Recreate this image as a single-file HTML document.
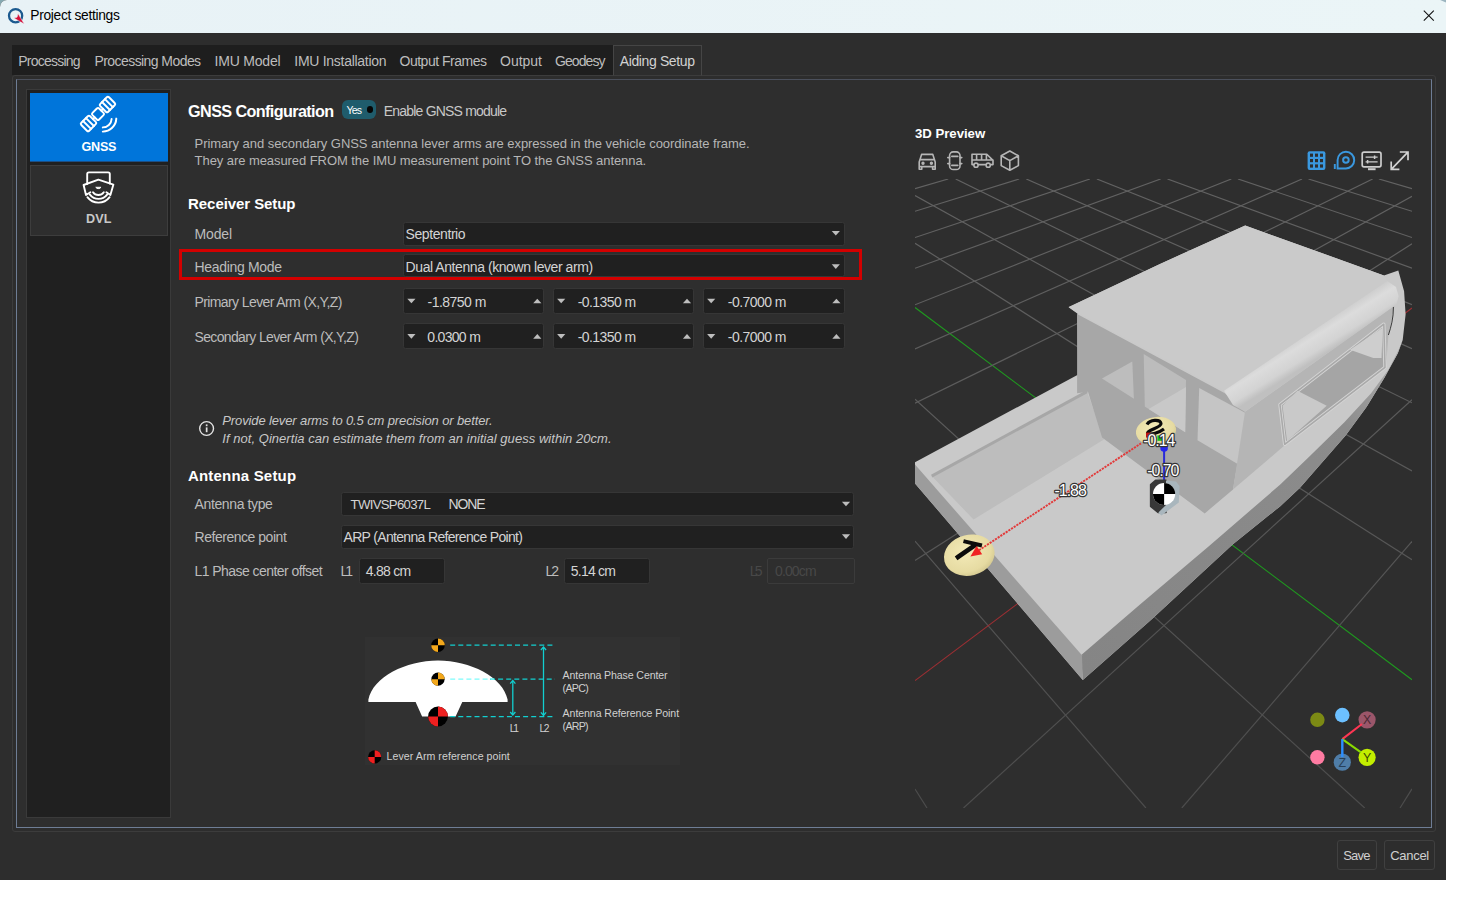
<!DOCTYPE html>
<html><head><meta charset="utf-8"><title>Project settings</title>
<style>
html,body{margin:0;padding:0;}
body{width:1465px;height:900px;background:#fff;position:relative;overflow:hidden;font-family:"Liberation Sans",sans-serif;}
.abs{position:absolute;}
.t{position:absolute;white-space:pre;line-height:1;}
#win{position:absolute;left:0;top:0;width:1446px;height:880px;background:#2d2d2d;overflow:hidden;border-top-left-radius:7px;}
#title{position:absolute;left:0;top:0;width:1446px;height:33px;background:linear-gradient(90deg,#e8f2f6,#ebf5f7);}
.box{position:absolute;box-sizing:border-box;}
.inp{position:absolute;box-sizing:border-box;background:#202020;border:1px solid #363636;border-radius:2.5px;}
</style></head><body>
<div class="abs" style="left:0;top:0;width:10px;height:10px;background:#86a9b1;"></div>
<div id="win">
<div id="title"></div>

<svg class="abs" style="left:0;top:0" width="1446" height="34" viewBox="0 0 1446 34">
 <circle cx="15.6" cy="15.7" r="6.6" fill="none" stroke="#1c5a8f" stroke-width="2.3"/>
 <polygon points="18,13.6 24.3,24.1 13.9,18.1 17.1,17.2" fill="#d5103a" stroke="#eaf3f7" stroke-width="0.5"/>
 <path d="M1423.8 10.7 L1433.8 20.7 M1433.8 10.7 L1423.8 20.7" stroke="#111" stroke-width="1.1" fill="none"/>
 <polygon points="1440.2,0 1446,0 1446,2.6" fill="#9bb4bf"/>
</svg>
<div class="box" style="left:12px;top:45px;width:601px;height:30px;background:#1e1e1e;"></div>
<div class="box" style="left:12px;top:75px;width:1424px;height:757px;border:1px solid #3c3c3c;border-radius:3px;"></div>
<div class="box" style="left:613px;top:45px;width:89px;height:31px;border:1px solid #454545;border-bottom:1px solid #3c3c3c;background:#2d2d2d;"></div>
<div class="box" style="left:16px;top:79px;width:1416px;height:749px;border:1px solid #6e7d95;border-top-color:#4b505c;background:#2e2e2e;"></div>
<div class="box" style="left:26px;top:89px;width:145px;height:729px;border:1px solid #3a3a3a;background:#202020;"></div>
<div class="box" style="left:30px;top:93px;width:137.5px;height:69px;background:#0075da;border-bottom:1px solid #1c4f86;"></div>
<div class="box" style="left:30px;top:165px;width:137.5px;height:71px;background:#2e2e2e;border:1px solid #3d3d3d;"></div>
<svg class="abs" style="left:30px;top:93px" width="138" height="145" viewBox="30 93 138 145" fill="none" stroke="#fff" stroke-width="1.95" stroke-linejoin="round" stroke-linecap="round">
 <g transform="translate(98,114) rotate(-45)">
  <rect x="-19.6" y="-5.6" width="12.4" height="11.2" rx="1.6"/>
  <path d="M-15.5 -5.6 V5.6 M-11.4 -5.6 V5.6"/>
  <rect x="-4.7" y="-4.7" width="9.4" height="9.4" rx="1.6"/>
  <path d="M-7.2 0 H-4.7 M4.7 0 H7.2"/>
  <rect x="7.2" y="-5.6" width="12.4" height="11.2" rx="1.6"/>
  <path d="M11.3 -5.6 V5.6 M15.4 -5.6 V5.6"/>
 </g>
 <path d="M116.3 118.6 A13.6 13.6 0 0 1 102.8 131.6"/>
 <path d="M111.6 119 A8.9 8.9 0 0 1 102.8 127.4"/>
 <g stroke-width="1.9">
 <path d="M87.2 184 V174 a1.6 1.6 0 0 1 1.6 -1.6 H108.2 a1.6 1.6 0 0 1 1.6 1.6 V183.6"/>
 <path d="M83.6 185 L98.4 179.6 L113.4 184.6 L110.4 195 L106.4 192.2 M83.6 185 L86 195 L90.4 192.2"/>
 <path d="M89.9 194.6 A10.8 10.8 0 0 0 107.1 194.6"/>
 <path d="M87.4 197.2 A14 14 0 0 0 109.6 197.2"/>
 <path d="M93 192.2 A6.6 6.6 0 0 0 103.8 192.2"/>
 </g>
 <path d="M96 187.6 A3 3 0 0 0 100.8 187.6 Z" fill="#fff" stroke-width="1"/>
</svg>
<div class="box" style="left:1336.5px;top:839.5px;width:40.5px;height:30px;border:1px solid #404040;border-radius:3px;"></div>
<div class="box" style="left:1384px;top:839.5px;width:51.3px;height:30px;border:1px solid #404040;border-radius:3px;"></div>


<div class="box" style="left:341.8px;top:100.1px;width:34.3px;height:18.6px;border-radius:6px;background:#1f5c6c;"></div>
<div class="box" style="left:366.5px;top:106.1px;width:6.6px;height:6.6px;border-radius:50%;background:#050505;"></div>
<div class="inp" style="left:402.5px;top:221.5px;width:442.5px;height:24px;"></div>
<div class="inp" style="left:402.5px;top:254px;width:442.5px;height:23px;"></div>
<div class="box" style="left:179px;top:249px;width:683px;height:31px;border:3px solid #d30000;"></div>
<div class="inp" style="left:402.5px;top:288px;width:141.5px;height:26px;"></div>
<div class="inp" style="left:553px;top:288px;width:141px;height:26px;"></div>
<div class="inp" style="left:703px;top:288px;width:142px;height:26px;"></div>
<div class="inp" style="left:402.5px;top:322.5px;width:141.5px;height:26.5px;"></div>
<div class="inp" style="left:553px;top:322.5px;width:141px;height:26.5px;"></div>
<div class="inp" style="left:703px;top:322.5px;width:142px;height:26.5px;"></div>
<div class="inp" style="left:341.3px;top:492px;width:513px;height:23.7px;"></div>
<div class="inp" style="left:341.3px;top:524.7px;width:513px;height:24.5px;"></div>
<div class="inp" style="left:358.9px;top:557.6px;width:86.4px;height:26.6px;"></div>
<div class="inp" style="left:563.6px;top:557.6px;width:86.9px;height:26.6px;"></div>
<div class="box" style="left:767.2px;top:557.6px;width:87.4px;height:26.6px;border:1px solid #3b3b3b;border-radius:2px;"></div>
<svg class="abs" style="left:170px;top:90px" width="700" height="500" viewBox="170 90 700 500">
 <polygon points="831.7,230.9 839.9,230.9 835.8,235.5" fill="#bdbdbd"/><polygon points="831.7,264.3 839.9,264.3 835.8,268.9" fill="#bdbdbd"/>
 <polygon points="841.9,501.7 850.1,501.7 846.0,506.3" fill="#bdbdbd"/><polygon points="841.9,534.3 850.1,534.3 846.0,538.9" fill="#bdbdbd"/>
 <polygon points="407.3,298.7 415.5,298.7 411.4,303.3" fill="#bdbdbd"/><polygon points="557.1,298.7 565.3,298.7 561.2,303.3" fill="#bdbdbd"/><polygon points="707.1,298.7 715.3,298.7 711.2,303.3" fill="#bdbdbd"/><polygon points="407.3,334.1 415.5,334.1 411.4,338.7" fill="#bdbdbd"/><polygon points="557.1,334.1 565.3,334.1 561.2,338.7" fill="#bdbdbd"/><polygon points="707.1,334.1 715.3,334.1 711.2,338.7" fill="#bdbdbd"/>
 <polygon points="533.2,303.3 541.4,303.3 537.3,298.7" fill="#bdbdbd"/><polygon points="682.9,303.3 691.1,303.3 687.0,298.7" fill="#bdbdbd"/><polygon points="832.3,303.3 840.5,303.3 836.4,298.7" fill="#bdbdbd"/><polygon points="533.2,338.7 541.4,338.7 537.3,334.1" fill="#bdbdbd"/><polygon points="682.9,338.7 691.1,338.7 687.0,334.1" fill="#bdbdbd"/><polygon points="832.3,338.7 840.5,338.7 836.4,334.1" fill="#bdbdbd"/>
 <circle cx="206.6" cy="428.5" r="6.9" fill="none" stroke="#e4e4e4" stroke-width="1.4"/>
 <rect x="205.8" y="427.4" width="1.7" height="4.8" fill="#e4e4e4"/><rect x="205.8" y="424.4" width="1.7" height="1.8" fill="#e4e4e4"/>
</svg>


<div class="box" style="left:365px;top:637px;width:315px;height:128px;background:#313131;"></div>
<svg class="abs" style="left:360px;top:630px" width="330" height="140" viewBox="360 630 330 140">
 <path d="M368.4 702 V699.6 C373 677 406 660.5 438 660.5 C470 660.5 503 677 507.6 699.6 V702 H462.3 L455.6 716.5 H422.1 L415.6 702 Z" fill="#fff"/>
 <g stroke="#12cfd0" stroke-width="1.3" stroke-dasharray="5 3.1" fill="none">
  <path d="M450.2 645.2 H555"/><path d="M450.2 716.6 H555"/><path d="M490 679.2 H555"/>
 </g>
 <path d="M450.2 679.2 H494" stroke="#7ffcfc" stroke-width="1.3" stroke-dasharray="5 3.1" fill="none"/>
 <path d="M512.8 681 V714.6" stroke="#12cfd0" stroke-width="1.3" fill="none"/><path d="M510.19999999999993 683.6 L512.8 680.6 L515.4 683.6 M510.19999999999993 712.0 L512.8 715.0 L515.4 712.0" stroke="#12cfd0" stroke-width="1.3" fill="none"/><path d="M543.5 647.4 V715" stroke="#12cfd0" stroke-width="1.3" fill="none"/><path d="M540.9 650.0 L543.5 647.0 L546.1 650.0 M540.9 712.4 L543.5 715.4 L546.1 712.4" stroke="#12cfd0" stroke-width="1.3" fill="none"/>
 <circle cx="438" cy="645.2" r="6.8" fill="#000"/><path d="M438 645.2 L438 638.4000000000001 A6.8 6.8 0 0 1 444.8 645.2 Z" fill="#f3a81c"/><path d="M438 645.2 L438 652.0 A6.8 6.8 0 0 1 431.2 645.2 Z" fill="#f3a81c"/><circle cx="438" cy="679.2" r="6.6" fill="#000"/><path d="M438 679.2 L438 672.6 A6.6 6.6 0 0 1 444.6 679.2 Z" fill="#f3a81c"/><path d="M438 679.2 L438 685.8000000000001 A6.6 6.6 0 0 1 431.4 679.2 Z" fill="#f3a81c"/><circle cx="438" cy="716.5" r="9.9" fill="#000"/><path d="M438 716.5 L438 706.6 A9.9 9.9 0 0 1 447.9 716.5 Z" fill="#ee2020"/><path d="M438 716.5 L438 726.4 A9.9 9.9 0 0 1 428.1 716.5 Z" fill="#ee2020"/><circle cx="374.7" cy="756.9" r="6.6" fill="#000"/><path d="M374.7 756.9 L374.7 750.3 A6.6 6.6 0 0 1 381.3 756.9 Z" fill="#ee2020"/><path d="M374.7 756.9 L374.7 763.5 A6.6 6.6 0 0 1 368.09999999999997 756.9 Z" fill="#ee2020"/>
</svg>


<svg class="abs" style="left:900px;top:120px" width="540" height="700" viewBox="900 120 540 700">
<defs><clipPath id="vp"><rect x="915" y="179" width="497" height="629"/></clipPath><linearGradient id="gl" gradientUnits="userSpaceOnUse" x1="0" y1="179" x2="0" y2="808"><stop offset="0" stop-color="#626262"/><stop offset="0.5" stop-color="#585858"/><stop offset="1" stop-color="#4c4c4c"/></linearGradient></defs>

<g fill="none" stroke="#b6b6b6" stroke-width="1.6" stroke-linejoin="round" stroke-linecap="round">
 <!-- car front -->
 <path d="M919.2 169.2 V162 L921.6 154.4 H932.8 L935.2 162 V169.2 M919.2 166.6 H935.2 M920.2 159.6 H934.2 M919.2 169.2 H921.8 V166.8 M935.2 169.2 H932.6 V166.8"/>
 <circle cx="923" cy="163.2" r="0.9" fill="#b6b6b6"/><circle cx="931.4" cy="163.2" r="0.9" fill="#b6b6b6"/>
 <!-- car top -->
 <rect x="949.6" y="151.9" width="10.4" height="17.6" rx="3.6"/>
 <path d="M951.8 156.4 H957.8 M951.8 165.4 H957.8 M947.8 157.6 H949.6 M960 157.6 H961.8 M947.8 163.6 H949.6 M960 163.6 H961.8"/>
 <!-- van -->
 <path d="M972 164.6 V154.2 H986.8 L993 160.4 V164.6 H991.2 M972 164.6 H973.6 M978.4 164.6 H985.4 M972 160 H993 M976.6 154.2 V160 M981.6 154.2 V160 M986.4 154.2 V160"/>
 <circle cx="976" cy="165.2" r="2.1"/><circle cx="988.2" cy="165.2" r="2.1"/>
 <!-- cube -->
 <path d="M1009.8 151 L1018.4 155.8 V165.6 L1009.8 170.2 L1001.2 165.6 V155.8 Z M1001.2 155.8 L1009.8 160.6 L1018.4 155.8 M1009.8 160.6 V170.2"/>
</g>
<!-- grid icon -->
<rect x="1307.6" y="151.2" width="17.8" height="18.8" rx="2" fill="#3a98df"/>
<g fill="#2e2e2e">
 <rect x="1310" y="153.6" width="3" height="3.2"/><rect x="1315" y="153.6" width="3" height="3.2"/><rect x="1320" y="153.6" width="3" height="3.2"/>
 <rect x="1310" y="159" width="3" height="3.2"/><rect x="1315" y="159" width="3" height="3.2"/><rect x="1320" y="159" width="3" height="3.2"/>
 <rect x="1310" y="164.4" width="3" height="3.2"/><rect x="1315" y="164.4" width="3" height="3.2"/><rect x="1320" y="164.4" width="3" height="3.2"/>
</g>
<g fill="none" stroke="#3a98df" stroke-width="1.95">
 <path d="M1337.6 168.4 V160 A8.3 8.3 0 1 1 1345.9 168.4 Z"/>
 <circle cx="1345.9" cy="160" r="2.8"/>
 <path d="M1334.8 164 V169" stroke-width="1.9"/>
</g>
<g fill="none" stroke="#cdcdcd" stroke-width="1.7" stroke-linejoin="round">
 <rect x="1362.2" y="152.2" width="18.8" height="14.6" rx="1.8"/>
 <path d="M1368 169.2 H1375.6" stroke-width="2"/>
 <path d="M1365.6 157.2 H1377.6 M1365.6 161.8 H1377.6" stroke-width="1.2"/>
 <path d="M1374.6 155.4 V159 M1367.6 160 V163.6" stroke-width="1.5"/>
</g>
<g fill="none" stroke="#d2d2d2" stroke-width="1.7">
 <path d="M1392 168.6 L1407.4 152.6 M1399.8 152 H1408 V160.2 M1391.2 161.4 V169.4 H1399.4"/>
</g>

<g clip-path="url(#vp)">
<line x1="915.0" y1="789.0" x2="927.0" y2="808.0" stroke="url(#gl)" stroke-width="1.15"/>
<line x1="915.0" y1="541.1" x2="1145.9" y2="808.0" stroke="url(#gl)" stroke-width="1.15"/>
<line x1="915.0" y1="399.3" x2="1364.7" y2="808.0" stroke="url(#gl)" stroke-width="1.15"/>
<line x1="915.0" y1="307.5" x2="1412.0" y2="679.7" stroke="#1f9a1f" stroke-width="1.15"/>
<line x1="915.0" y1="243.2" x2="1412.0" y2="559.7" stroke="url(#gl)" stroke-width="1.15"/>
<line x1="915.0" y1="195.6" x2="1412.0" y2="471.0" stroke="url(#gl)" stroke-width="1.15"/>
<line x1="955.7" y1="179.0" x2="1412.0" y2="402.8" stroke="url(#gl)" stroke-width="1.15"/>
<line x1="1026.3" y1="179.0" x2="1412.0" y2="348.6" stroke="url(#gl)" stroke-width="1.15"/>
<line x1="1096.9" y1="179.0" x2="1412.0" y2="304.6" stroke="url(#gl)" stroke-width="1.15"/>
<line x1="1167.5" y1="179.0" x2="1412.0" y2="268.2" stroke="url(#gl)" stroke-width="1.15"/>
<line x1="1238.0" y1="179.0" x2="1412.0" y2="237.5" stroke="url(#gl)" stroke-width="1.15"/>
<line x1="1308.5" y1="179.0" x2="1412.0" y2="211.3" stroke="url(#gl)" stroke-width="1.15"/>
<line x1="1378.9" y1="179.0" x2="1412.0" y2="188.6" stroke="url(#gl)" stroke-width="1.15"/>
<line x1="915.0" y1="188.6" x2="948.2" y2="179.0" stroke="url(#gl)" stroke-width="1.15"/>
<line x1="915.0" y1="211.3" x2="1019.1" y2="179.0" stroke="url(#gl)" stroke-width="1.15"/>
<line x1="915.0" y1="237.5" x2="1089.9" y2="179.0" stroke="url(#gl)" stroke-width="1.15"/>
<line x1="915.0" y1="268.3" x2="1160.6" y2="179.0" stroke="url(#gl)" stroke-width="1.15"/>
<line x1="915.0" y1="304.8" x2="1231.3" y2="179.0" stroke="url(#gl)" stroke-width="1.15"/>
<line x1="915.0" y1="348.9" x2="1302.0" y2="179.0" stroke="url(#gl)" stroke-width="1.15"/>
<line x1="915.0" y1="403.2" x2="1372.6" y2="179.0" stroke="url(#gl)" stroke-width="1.15"/>
<line x1="915.0" y1="471.5" x2="1412.0" y2="196.3" stroke="url(#gl)" stroke-width="1.15"/>
<line x1="915.0" y1="560.4" x2="1412.0" y2="243.8" stroke="url(#gl)" stroke-width="1.15"/>
<line x1="915.0" y1="680.6" x2="1412.0" y2="308.0" stroke="#9c2f33" stroke-width="1.15"/>
<line x1="963.5" y1="808.0" x2="1412.0" y2="399.8" stroke="url(#gl)" stroke-width="1.15"/>
<line x1="1181.8" y1="808.0" x2="1412.0" y2="541.4" stroke="url(#gl)" stroke-width="1.15"/>
<line x1="1400.0" y1="808.0" x2="1412.0" y2="788.9" stroke="url(#gl)" stroke-width="1.15"/>
<defs><linearGradient id="gh" gradientUnits="userSpaceOnUse" x1="1085" y1="670" x2="1400" y2="300"><stop offset="0" stop-color="#858585"/><stop offset="0.73" stop-color="#8c8c8c"/><stop offset="0.88" stop-color="#a8a8a8"/><stop offset="1" stop-color="#c4c4c4"/></linearGradient><linearGradient id="gc" gradientUnits="userSpaceOnUse" x1="1300" y1="336" x2="1315" y2="360"><stop offset="0" stop-color="#cecece"/><stop offset="0.3" stop-color="#dcdcdc"/><stop offset="0.75" stop-color="#d3d3d3"/><stop offset="1" stop-color="#c0c0c0"/></linearGradient><radialGradient id="ga" cx="0.45" cy="0.4" r="0.7"><stop offset="0" stop-color="#f3eab8"/><stop offset="0.7" stop-color="#e6dba2"/><stop offset="1" stop-color="#c9bd85"/></radialGradient></defs>
<polygon points="915.0,462.2 1078.3,374.4 1077.3,313.5 1068.6,307.2 1160.0,263.9 1245.2,225.5 1383.9,275.4 1398.3,270.5 1404.1,291.3 1405.6,314.4 1403.6,332.0 1402.7,340.0 1397.8,353.3 1384.4,377.8 1366.7,406.7 1345.6,435.6 1300.0,487.8 1280.0,506.4 1232.6,544.6 1150.9,620.0 1082.8,680.0 915.0,483.4" fill="#c9c9c9"/>
<polygon points="1081.0,655.2 1140.0,604.4 1210.0,545.3 1280.0,484.7 1308.9,457.0 1344.4,422.2 1371.1,393.3 1388.9,368.9 1400.0,346.7 1402.7,340.0 1402.7,340.0 1397.8,353.3 1384.4,377.8 1366.7,406.7 1345.6,435.6 1300.0,487.8 1280.0,506.4 1232.6,544.6 1150.9,620.0 1082.8,680.0" fill="url(#gh)"/>
<polygon points="915.0,464.6 1082.0,655.3 1082.8,680.0 915.0,483.4" fill="#9c9c9c"/>
<polygon points="931.7,476.1 1087.0,391.6 1104.3,439.2 973.6,519.5" fill="#bdbdbd"/>
<path d="M931.7 476.1 L1087 391.6" stroke="#a7a7a7" stroke-width="3"/>
<polygon points="1077.1,314.0 1224.9,393.3 1246.2,412.8 1233.0,489.5 1204.7,513.4 1102.1,437.4 1088.0,391.8 1077.1,393.3" fill="#a7a7a7"/>
<polygon points="1102.0,378.5 1132.3,361.4 1133.9,398.8" fill="#bdbdbd"/>
<polygon points="1143.7,354.1 1186.0,380.0 1185.2,432.2 1144.8,406.5" fill="#bcbcbc"/>
<polygon points="1148.6,408.9 1186.0,387.0 1185.2,432.2" fill="#c8c8c8"/>
<polygon points="1199.2,387.9 1246.6,413.5 1239.3,464.9 1197.5,440.3" fill="#c5c5c5"/>
<polygon points="1245.0,411.7 1394.5,305.6 1388.5,335.0 1386.2,364.0 1380.0,368.9 1331.1,408.9 1284.4,445.6 1233.0,489.5" fill="#b5b5b5"/>
<polygon points="1280.0,404.7 1383.8,324.2 1385.0,367.3 1284.7,444.3" fill="#a5a5a5" stroke="#d4d4d4" stroke-width="3.4" stroke-linejoin="round"/>
<polygon points="1280.0,404.7 1383.8,324.2 1385.0,367.3 1284.7,444.3" fill="none" stroke="#a9a9a9" stroke-width="1.5" stroke-linejoin="round"/>
<polygon points="1282.5,405.7 1297.5,390.7 1326.7,405.8 1287.0,441.0" fill="#c9c9c9"/>
<polygon points="1350.0,349.8 1382.7,327.7 1381.5,358.0 1373.3,358.0" fill="#cecece"/>
<path d="M1393.4 307 C1393.6 318 1391 327 1388.4 335" stroke="#3a3a3a" stroke-width="1" fill="none"/>
<polygon points="1068.6,307.0 1160.0,263.9 1245.2,225.5 1383.9,275.4 1387.3,281.0 1224.0,390.7 1075.6,311.7" fill="#cacaca"/>
<polygon points="1224.0,390.7 1387.3,281.0 1396.0,287.0 1398.6,296.0 1396.7,304.3 1245.0,411.7 1233.0,405.0" fill="url(#gc)"/>

<ellipse cx="969.3" cy="555.2" rx="25.6" ry="20.4" transform="rotate(-14 969.3 555.2)" fill="url(#ga)"/>
<path d="M958 557 L975 545.2" stroke="#0b0b0b" stroke-width="4.6" stroke-linecap="square"/>
<path d="M965.4 541.6 L980 545" stroke="#0b0b0b" stroke-width="4" stroke-linecap="square"/>
<ellipse cx="1156" cy="431" rx="20.2" ry="14" transform="rotate(-8 1156 431)" fill="url(#ga)"/>
<path d="M1147 424.5 C1150 419.5 1160 419 1161 423.5 C1161.5 427.5 1147 430 1147.5 433 C1150 436 1160 432 1164 429" fill="none" stroke="#0a0a0a" stroke-width="3.2"/>
<path d="M979 550.2 L1141 443.4" stroke="#e23a3a" stroke-width="1.9" stroke-dasharray="2.2 1"/>
<path d="M970.4 556.6 L976.6 546 L982.2 554.2 Z" fill="#f02222"/>
<rect x="1146" y="432.6" width="5" height="5" fill="#c01010"/>
<rect x="1157.4" y="435.4" width="5.4" height="5.4" fill="#10c010"/>
<path d="M1164.1 447.6 V483" stroke="#2a2ad8" stroke-width="2"/>
<circle cx="1164.1" cy="447.9" r="3.8" fill="#2626ee"/>
<path d="M1150.6 484.6 L1155.6 480.2 H1166 V512.6 L1158 512.4 L1150.6 506.4 Z" fill="#383838" stroke="#383838" stroke-width="1.5" stroke-linejoin="round"/>
<path d="M1166 480.6 L1176 481.4 L1179.6 486 L1178.8 502.6 L1161.4 515.4 L1158.4 512.4 L1166 505 Z" fill="#a9b6bd"/>
<circle cx="1164.1" cy="494" r="11.1" fill="#fff"/>
<path d="M1164.1 494 V482.9 A11.1 11.1 0 0 1 1175.2 494 Z" fill="#000"/>
<path d="M1164.1 494 V505.1 A11.1 11.1 0 0 1 1153 494 Z" fill="#000"/>
<text x="1054.6" y="495.8" font-size="16" letter-spacing="-1.05" font-family="Liberation Sans, sans-serif" fill="#fff" stroke="#333" stroke-width="2.4" paint-order="stroke" stroke-linejoin="round">-1.88</text>
<text x="1143.2" y="445.6" font-size="16" letter-spacing="-1.05" font-family="Liberation Sans, sans-serif" fill="#fff" stroke="#333" stroke-width="2.4" paint-order="stroke" stroke-linejoin="round">-0.14</text>
<text x="1147.2" y="476.2" font-size="16" letter-spacing="-1.05" font-family="Liberation Sans, sans-serif" fill="#fff" stroke="#333" stroke-width="2.4" paint-order="stroke" stroke-linejoin="round">-0.70</text>


<circle cx="1317.4" cy="719.8" r="7.2" fill="#7c8a14"/>
<circle cx="1342.3" cy="715.1" r="7.3" fill="#6cc0ff"/>
<circle cx="1317.4" cy="757.3" r="7.2" fill="#ff7ba2"/>
<circle cx="1367.1" cy="719.8" r="8.6" fill="#9b566a"/>
<circle cx="1342.3" cy="762.2" r="8.6" fill="#4f7da8"/>
<circle cx="1367.1" cy="757.3" r="8.6" fill="#c3ee00"/>
<path d="M1342.3 739.1 L1362 724" stroke="#ff3653" stroke-width="2"/>
<path d="M1342.3 739.1 L1361 752.4" stroke="#8adb00" stroke-width="2"/>
<path d="M1342.3 739.1 V757" stroke="#2c8fff" stroke-width="2.4"/>
<g font-family="Liberation Sans, sans-serif" font-size="12.4" text-anchor="middle">
<text x="1367.1" y="724.4" fill="#4a2832">X</text>
<text x="1342.3" y="766.8" fill="#27405a">Z</text>
<text x="1367.1" y="761.9" fill="#3c4a00">Y</text>
</g>

</g>
</svg>

<span class="t" id="t0" style="left:30.3px;top:9.22px;font-size:13.8px;color:#000;letter-spacing:-0.322px;">Project settings</span>
<span class="t" id="t1" style="left:18.2px;top:53.95px;font-size:14px;color:#bdbdbd;letter-spacing:-0.763px;">Processing</span>
<span class="t" id="t2" style="left:94.5px;top:53.95px;font-size:14px;color:#bdbdbd;letter-spacing:-0.571px;">Processing Modes</span>
<span class="t" id="t3" style="left:214.5px;top:53.95px;font-size:14px;color:#bdbdbd;letter-spacing:-0.199px;">IMU Model</span>
<span class="t" id="t4" style="left:294.3px;top:53.95px;font-size:14px;color:#bdbdbd;letter-spacing:-0.280px;">IMU Installation</span>
<span class="t" id="t5" style="left:399.5px;top:53.95px;font-size:14px;color:#bdbdbd;letter-spacing:-0.489px;">Output Frames</span>
<span class="t" id="t6" style="left:500.0px;top:53.95px;font-size:14px;color:#bdbdbd;letter-spacing:-0.006px;">Output</span>
<span class="t" id="t7" style="left:555.0px;top:53.95px;font-size:14px;color:#bdbdbd;letter-spacing:-0.908px;">Geodesy</span>
<span class="t" id="t8" style="left:619.7px;top:53.95px;font-size:14px;color:#d2d2d2;letter-spacing:-0.373px;">Aiding Setup</span>
<span class="t" id="t9" style="left:81.4px;top:140.83px;font-size:12.6px;color:#fff;font-weight:bold;letter-spacing:-0.201px;">GNSS</span>
<span class="t" id="t10" style="left:86.0px;top:213.33px;font-size:12.6px;color:#c8c8c8;font-weight:bold;letter-spacing:0.156px;">DVL</span>
<span class="t" id="t11" style="left:188.1px;top:102.69px;font-size:16.2px;color:#fff;font-weight:bold;letter-spacing:-0.611px;">GNSS Configuration</span>
<span class="t" id="t12" style="left:346.6px;top:104.71px;font-size:10.5px;color:#fff;letter-spacing:-0.819px;">Yes</span>
<span class="t" id="t13" style="left:383.8px;top:104.05px;font-size:14px;color:#c8c8c8;letter-spacing:-0.804px;">Enable GNSS module</span>
<span class="t" id="t14" style="left:194.6px;top:137.40px;font-size:13px;color:#b6b6b6;letter-spacing:-0.047px;">Primary and secondary GNSS antenna lever arms are expressed in the vehicle coordinate frame.</span>
<span class="t" id="t15" style="left:194.6px;top:154.30px;font-size:13px;color:#b6b6b6;letter-spacing:-0.067px;">They are measured FROM the IMU measurement point TO the GNSS antenna.</span>
<span class="t" id="t16" style="left:188.1px;top:196.20px;font-size:15px;color:#fff;font-weight:bold;letter-spacing:-0.076px;">Receiver Setup</span>
<span class="t" id="t17" style="left:194.6px;top:227.25px;font-size:14px;color:#bcbcbc;letter-spacing:-0.158px;">Model</span>
<span class="t" id="t18" style="left:405.6px;top:227.25px;font-size:14px;color:#d4d4d4;letter-spacing:-0.425px;">Septentrio</span>
<span class="t" id="t19" style="left:194.6px;top:260.15px;font-size:14px;color:#bcbcbc;letter-spacing:-0.334px;">Heading Mode</span>
<span class="t" id="t20" style="left:405.6px;top:260.15px;font-size:14px;color:#d4d4d4;letter-spacing:-0.431px;">Dual Antenna (known lever arm)</span>
<span class="t" id="t21" style="left:194.5px;top:294.65px;font-size:14px;color:#bcbcbc;letter-spacing:-0.602px;">Primary Lever Arm (X,Y,Z)</span>
<span class="t" id="t22" style="left:194.5px;top:330.05px;font-size:14px;color:#bcbcbc;letter-spacing:-0.644px;">Secondary Lever Arm (X,Y,Z)</span>
<span class="t" id="t23" style="left:427.6px;top:294.65px;font-size:14px;color:#d4d4d4;letter-spacing:-0.542px;">-1.8750 m</span>
<span class="t" id="t24" style="left:577.7px;top:294.65px;font-size:14px;color:#d4d4d4;letter-spacing:-0.555px;">-0.1350 m</span>
<span class="t" id="t25" style="left:727.8px;top:294.65px;font-size:14px;color:#d4d4d4;letter-spacing:-0.555px;">-0.7000 m</span>
<span class="t" id="t26" style="left:427.3px;top:330.05px;font-size:14px;color:#d4d4d4;letter-spacing:-0.697px;">0.0300 m</span>
<span class="t" id="t27" style="left:577.7px;top:330.05px;font-size:14px;color:#d4d4d4;letter-spacing:-0.555px;">-0.1350 m</span>
<span class="t" id="t28" style="left:727.8px;top:330.05px;font-size:14px;color:#d4d4d4;letter-spacing:-0.555px;">-0.7000 m</span>
<span class="t" id="t29" style="left:222.3px;top:414.30px;font-size:13px;color:#c8c8c8;font-style:italic;letter-spacing:-0.124px;">Provide lever arms to 0.5 cm precision or better.</span>
<span class="t" id="t30" style="left:222.3px;top:432.00px;font-size:13px;color:#c8c8c8;font-style:italic;letter-spacing:0.040px;">If not, Qinertia can estimate them from an initial guess within 20cm.</span>
<span class="t" id="t31" style="left:188.0px;top:467.60px;font-size:15px;color:#fff;font-weight:bold;letter-spacing:0.188px;">Antenna Setup</span>
<span class="t" id="t32" style="left:194.5px;top:497.25px;font-size:14px;color:#bcbcbc;letter-spacing:-0.374px;">Antenna type</span>
<span class="t" id="t33" style="left:350.6px;top:497.93px;font-size:13.2px;color:#d4d4d4;letter-spacing:-0.703px;">TWIVSP6037L</span>
<span class="t" id="t34" style="left:448.6px;top:497.25px;font-size:14px;color:#d4d4d4;letter-spacing:-1.153px;">NONE</span>
<span class="t" id="t35" style="left:194.5px;top:530.15px;font-size:14px;color:#bcbcbc;letter-spacing:-0.468px;">Reference point</span>
<span class="t" id="t36" style="left:343.5px;top:530.15px;font-size:14px;color:#d4d4d4;letter-spacing:-0.668px;">ARP (Antenna Reference Point)</span>
<span class="t" id="t37" style="left:194.5px;top:564.15px;font-size:14px;color:#bcbcbc;letter-spacing:-0.559px;">L1 Phase center offset</span>
<span class="t" id="t38" style="left:340.5px;top:564.15px;font-size:14px;color:#bcbcbc;letter-spacing:-3.082px;">L1</span>
<span class="t" id="t39" style="left:365.8px;top:564.45px;font-size:14px;color:#d4d4d4;letter-spacing:-0.752px;">4.88 cm</span>
<span class="t" id="t40" style="left:545.4px;top:564.15px;font-size:14px;color:#bcbcbc;letter-spacing:-1.987px;">L2</span>
<span class="t" id="t41" style="left:570.8px;top:564.45px;font-size:14px;color:#d4d4d4;letter-spacing:-0.769px;">5.14 cm</span>
<span class="t" id="t42" style="left:749.8px;top:564.15px;font-size:14px;color:#484848;letter-spacing:-2.784px;">L5</span>
<span class="t" id="t43" style="left:775.0px;top:564.45px;font-size:14px;color:#484848;letter-spacing:-0.865px;">0.00cm</span>
<span class="t" id="t44" style="left:509.8px;top:723.68px;font-size:10.3px;color:#d0d0d0;letter-spacing:-2.366px;">L1</span>
<span class="t" id="t45" style="left:539.4px;top:723.68px;font-size:10.3px;color:#d0d0d0;letter-spacing:-1.256px;">L2</span>
<span class="t" id="t46" style="left:562.6px;top:670.03px;font-size:10.6px;color:#d0d0d0;letter-spacing:-0.116px;">Antenna Phase Center</span>
<span class="t" id="t47" style="left:562.6px;top:683.43px;font-size:10.6px;color:#d0d0d0;letter-spacing:-0.660px;">(APC)</span>
<span class="t" id="t48" style="left:562.6px;top:708.23px;font-size:10.6px;color:#d0d0d0;letter-spacing:-0.086px;">Antenna Reference Point</span>
<span class="t" id="t49" style="left:562.6px;top:721.43px;font-size:10.6px;color:#d0d0d0;letter-spacing:-0.710px;">(ARP)</span>
<span class="t" id="t50" style="left:386.6px;top:751.43px;font-size:10.6px;color:#d0d0d0;letter-spacing:0.054px;">Lever Arm reference point</span>
<span class="t" id="t51" style="left:915.0px;top:127.43px;font-size:13.2px;color:#fff;font-weight:bold;letter-spacing:-0.021px;">3D Preview</span>
<span class="t" id="t52" style="left:1343.2px;top:848.50px;font-size:13px;color:#d0d0d0;letter-spacing:-0.810px;">Save</span>
<span class="t" id="t53" style="left:1390.3px;top:848.50px;font-size:13px;color:#d0d0d0;letter-spacing:-0.316px;">Cancel</span>
</div>
</body></html>
